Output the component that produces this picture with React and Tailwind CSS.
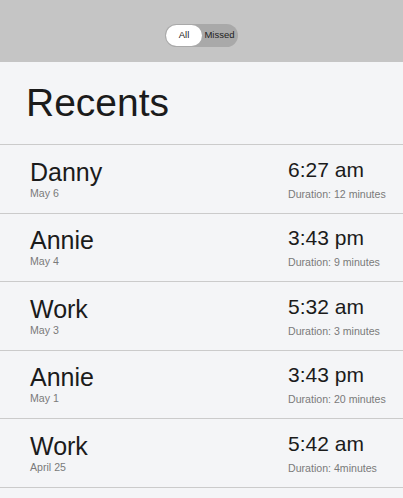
import { useState } from "react";

const calls = [
  { name: "Danny", date: "May 6", time: "6:27 am", duration: "Duration: 12 minutes" },
  { name: "Annie", date: "May 4", time: "3:43 pm", duration: "Duration: 9 minutes" },
  { name: "Work", date: "May 3", time: "5:32 am", duration: "Duration: 3 minutes" },
  { name: "Annie", date: "May 1", time: "3:43 pm", duration: "Duration: 20 minutes" },
  { name: "Work", date: "April 25", time: "5:42 am", duration: "Duration: 4minutes" },
];

const CallRow = ({ call }) => {
  return (
    <div className="flex h-[68.5px] items-center justify-between border-b border-[#cbcbcb] pl-[30px] pr-[15px]">
      <div className="flex flex-col">
        <span className="text-[25px] leading-[28px] text-[#1b1b1b]">{call.name}</span>
        <span className="text-[10.6px] leading-[14px] text-[#7a7a7a]">{call.date}</span>
      </div>
      <div className="flex w-[100px] flex-col whitespace-nowrap">
        <span className="text-[21px] leading-[26px] text-[#1b1b1b]">{call.time}</span>
        <span className="mt-[4px] text-[10.6px] leading-[14px] text-[#7a7a7a]">{call.duration}</span>
      </div>
    </div>
  );
};

const App = () => {
  const [tab, setTab] = useState("all");

  return (
    <div className="min-h-screen bg-[#f4f5f7] font-['Liberation_Sans',Arial,sans-serif]">
      <div className="flex h-[62px] justify-center bg-[#c5c5c5] pt-[24px]">
        <div className="flex h-[23px] w-[73px] items-center rounded-full bg-[#a9a9a9] p-[1px]">
          <button
            onClick={() => setTab("all")}
            className={
              tab === "all"
                ? "h-[21px] w-[36px] rounded-full bg-white text-[9.5px] text-[#222]"
                : "h-[21px] w-[36px] rounded-full text-[9.5px] text-[#222]"
            }
          >
            All
          </button>
          <button
            onClick={() => setTab("missed")}
            className={
              tab === "missed"
                ? "h-[21px] flex-1 rounded-full bg-white text-[9.5px] text-[#222]"
                : "h-[21px] flex-1 rounded-full text-[9.5px] text-[#222]"
            }
          >
            Missed
          </button>
        </div>
      </div>
      <div className="h-[83px] border-b border-[#cbcbcb] pl-[26px] pt-[17px]">
        <h1 className="text-[39px] leading-[48px] text-[#1b1b1b]">Recents</h1>
      </div>
      {calls.map((call, i) => (
        <CallRow key={i} call={call} />
      ))}
    </div>
  );
};

export default App;
